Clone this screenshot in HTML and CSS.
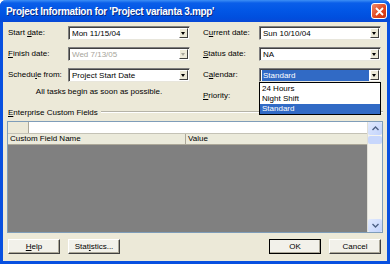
FILE: index.html
```html
<!DOCTYPE html>
<html lang="en">
	<head>
		<meta charset="utf-8">
		<title>Project Information</title>
        <link rel="stylesheet" href="styles.css">
	</head>
	<body>
		<div class="window">
			<div class="titlebar">
				<span class="title">Project Information for 'Project varianta 3.mpp'</span>
				<span class="close">
					<svg width="9" height="9" viewBox="0 0 9 9"><path d="M1 1 L8 8 M8 1 L1 8" stroke="#fff" stroke-width="1.8"/></svg>
				</span>
			</div>

			<div class="content">
				<div class="form">
					<label class="lbl">Start <u>d</u>ate:</label>
					<div class="combo"><span class="val">Mon 11/15/04</span><span class="arrow"></span></div>
					<label class="lbl right">C<u>u</u>rrent date:</label>
					<div class="combo"><span class="val">Sun 10/10/04</span><span class="arrow"></span></div>

					<label class="lbl"><u>F</u>inish date:</label>
					<div class="combo disabled"><span class="val">Wed 7/13/05</span><span class="arrow"></span></div>
					<label class="lbl right"><u>S</u>tatus date:</label>
					<div class="combo"><span class="val">NA</span><span class="arrow"></span></div>

					<label class="lbl">Schedu<u>l</u>e from:</label>
					<div class="combo"><span class="val">Project Start Date</span><span class="arrow"></span></div>
					<label class="lbl right">C<u>a</u>lendar:</label>
					<div class="combo open">
						<span class="val sel">Standard</span><span class="arrow"></span>
						<!-- open list of the calendar box -->
						<div class="droplist">
							<div class="item">24 Hours</div>
							<div class="item">Night Shift</div>
							<div class="item sel">Standard</div>
						</div>
					</div>

					<div class="note">All tasks begin as soon as possible.</div>
					<label class="lbl right"><u>P</u>riority:</label>
					<div class="combo"></div>
				</div>

				<div class="group"><span><u>E</u>nterprise Custom Fields</span><span class="rule"></span></div>

				<div class="grid">
					<div class="gridmain">
						<div class="editrow"><span class="cell"></span></div>
						<div class="headrow">
							<span class="col1">Custom Field Name</span>
							<span class="col2">Value</span>
						</div>
						<div class="body"></div>
					</div>
					<div class="scroll">
						<span class="sbtn"><svg width="7" height="5" viewBox="0 0 7 5"><path d="M0.5 4 L3.5 1 L6.5 4" fill="none" stroke="#4d6185" stroke-width="1.4"/></svg></span>
						<span class="thumb"></span>
						<span class="track"></span>
						<span class="sbtn"><svg width="7" height="5" viewBox="0 0 7 5"><path d="M0.5 1 L3.5 4 L6.5 1" fill="none" stroke="#4d6185" stroke-width="1.4"/></svg></span>
					</div>
				</div>

				<div class="buttons">
					<button class="btn"><u>H</u>elp</button>
					<button class="btn">Stat<u>i</u>stics...</button>
					<span class="spacer"></span>
					<button class="btn default">OK</button>
					<button class="btn">Cancel</button>
				</div>
			</div>
		</div>
	</body>
</html>
```

FILE: styles.css
```css
body {
    margin: 0;
    background: #ffffff;
    font-family: "Liberation Sans", Arial, sans-serif;
    font-size: 8px;
    color: #000;
}

.window {
    width: 390px;
    height: 264px;
    box-sizing: border-box;
    background: #ece9d8;
    border: 3px solid #0850e0;
    border-top: none;
    border-radius: 6px 6px 0 0;
    display: flex;
    flex-direction: column;
}

.titlebar {
    height: 22px;
    margin: 0 -3px;
    padding: 0 3px 0 6px;
    display: flex;
    align-items: center;
    justify-content: space-between;
    border-radius: 6px 6px 0 0;
    background: linear-gradient(#3d8ff5 0, #0a5ee9 3px, #0257e6 45%, #004fde 80%, #0848d6 100%);
}

.title {
    color: #fff;
    font-weight: bold;
    font-size: 10px;
    letter-spacing: -0.3px;
    text-shadow: 1px 1px 0 #0a2a80;
}

.close {
    width: 14px;
    height: 14px;
    display: flex;
    align-items: center;
    justify-content: center;
    border: 1px solid #fff;
    border-radius: 3px;
    background: linear-gradient(135deg, #f08a6c, #e0441c 60%, #c7330e);
}

.content {
    flex: 1;
    padding: 4px 4px 0 4px;
    display: flex;
    flex-direction: column;
}

.form {
    display: grid;
    grid-template-columns: 60px 122px 69px 122px;
    grid-auto-rows: 14px;
    row-gap: 7px;
    padding-left: 1px;
}

.lbl {
    display: block;
    line-height: 14px;
    white-space: nowrap;
}

.lbl.right {
    padding-left: 13px;
}

.combo {
    position: relative;
    display: flex;
    align-items: center;
    background: #fff;
    border: 1px solid;
    border-color: #7f7f7f #e8e6dc #e8e6dc #7f7f7f;
    box-shadow: inset 1px 1px 0 #404040;
    padding: 1px 1px 1px 2px;
}

.combo .val {
    flex: 1;
    padding-left: 1px;
    line-height: 11px;
    white-space: nowrap;
}

.combo .val.sel {
    background: #316ac5;
    color: #fff;
    margin-right: 1px;
}

.combo.disabled .val {
    color: #a7a59a;
}

.arrow {
    width: 9px;
    height: 10px;
    box-sizing: border-box;
    background: #ece9d8;
    border: 1px solid;
    border-color: #fff #404040 #404040 #fff;
    position: relative;
}

.arrow::after {
    content: "";
    position: absolute;
    left: 1px;
    top: 3px;
    border-left: 2.5px solid transparent;
    border-right: 2.5px solid transparent;
    border-top: 3px solid #000;
}

.combo.disabled .arrow::after {
    border-top-color: #a7a59a;
}

.droplist {
    position: absolute;
    left: -1px;
    right: -1px;
    top: 13px;
    z-index: 2;
    background: #fff;
    border: 1px solid #000;
    padding-top: 1px;
}

.droplist .item {
    height: 10px;
    line-height: 10px;
    padding-left: 2px;
}

.droplist .item.sel {
    background: #316ac5;
    color: #fff;
}

.note {
    grid-column: 1 / 3;
    text-align: center;
    align-self: start;
    margin-top: -3px;
    line-height: 11px;
}

.group {
    display: flex;
    align-items: center;
    margin-top: 4px;
    padding-left: 1px;
    height: 10px;
    white-space: nowrap;
}

.group .rule {
    flex: 1;
    margin-left: 3px;
    border-top: 1px solid #b5b3a8;
    border-bottom: 1px solid #fff;
}

.grid {
    margin-top: 4px;
    height: 110px;
    display: flex;
    border: 1px solid #7f9db9;
    background: #fff;
}

.gridmain {
    flex: 1;
    display: flex;
    flex-direction: column;
}

.editrow {
    height: 11px;
    border-bottom: 1px solid #c4c2b6;
}

.editrow .cell {
    display: block;
    width: 20px;
    height: 11px;
    background: #ece9d8;
    border-right: 1px solid #aca899;
}

.headrow {
    height: 10px;
    display: flex;
    align-items: center;
    background: #ebeadb;
    border-bottom: 1px solid #aca899;
    line-height: 10px;
}

.headrow .col1 {
    width: 175px;
    padding-left: 2px;
    border-right: 1px solid #aca899;
}

.headrow .col2 {
    padding-left: 2px;
}

.body {
    flex: 1;
    background: #808080;
}

.scroll {
    width: 14px;
    display: flex;
    flex-direction: column;
    background: #f5f4ee;
    border-left: 1px solid #e0dfd7;
}

.sbtn {
    height: 13px;
    display: flex;
    align-items: center;
    justify-content: center;
    background: linear-gradient(135deg, #e1eafe, #c2d3fc);
    border-radius: 2px;
}

.thumb {
    height: 8px;
    margin-top: 1px;
    background: #c8d7fc;
    border-radius: 2px;
}

.track {
    flex: 1;
}

.buttons {
    display: flex;
    gap: 8px;
    margin-top: 6px;
    padding-left: 1px;
    padding-right: 2px;
}

.spacer {
    flex: 1;
}

.btn {
    width: 52px;
    height: 15px;
    padding: 0;
    font-family: inherit;
    font-size: 8px;
    background: #f2f1ea;
    border: 1px solid;
    border-color: #fff #404040 #404040 #fff;
    box-shadow: inset -1px -1px 0 #aca899;
}

.btn.default {
    outline: 1px solid #000;
    outline-offset: -1px;
}
```
